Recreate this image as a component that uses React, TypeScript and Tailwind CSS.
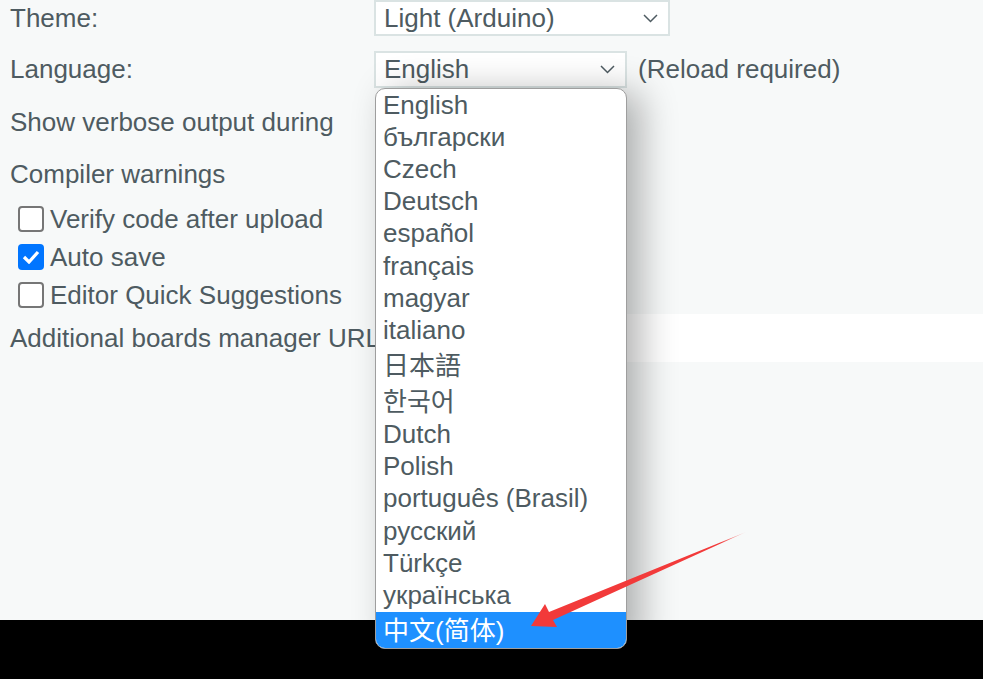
import React from "react";

const languages = [
  { label: "English" },
  { label: "български" },
  { label: "Czech" },
  { label: "Deutsch" },
  { label: "español" },
  { label: "français" },
  { label: "magyar" },
  { label: "italiano" },
  { label: "日本語", cjk: true },
  { label: "한국어", cjk: true },
  { label: "Dutch" },
  { label: "Polish" },
  { label: "português (Brasil)" },
  { label: "русский" },
  { label: "Türkçe" },
  { label: "українська" },
  { label: "中文(简体)", cjk: true, selected: true },
];

const Chevron = () => (
  <svg width="15" height="9" viewBox="0 0 15 9" fill="none">
    <polyline points="1,1 7.5,7.5 14,1" stroke="#4e5b61" strokeWidth="1.5" />
  </svg>
);

const Checkbox = ({ checked }: { checked?: boolean }) =>
  checked ? (
    <div className="w-[26px] h-[26px] rounded-[4px] bg-[#0075ff] flex items-center justify-center">
      <svg width="18" height="14" viewBox="0 0 18 14" fill="none">
        <polyline points="2,7 7,12 16,2" stroke="white" strokeWidth="3.2" />
      </svg>
    </div>
  ) : (
    <div className="w-[26px] h-[26px] rounded-[4px] border-2 border-[#767676] bg-white" />
  );

const App = () => {
  return (
    <div
      className="relative w-[983px] h-[679px] overflow-hidden bg-[#f7f9f9] text-[#4e5b61] text-[26px]"
      style={{ fontFamily: '"Liberation Sans", "Noto Sans CJK SC", sans-serif' }}
    >
      <div className="h-[620px] pl-[10px] flex flex-col">
        <div className="flex items-center h-[36px]">
          <div className="w-[364px]">Theme:</div>
          <div className="w-[296px] h-[36px] bg-white border-2 border-[#dae3e3] flex items-center justify-between pl-[8px] pr-[10px]">
            <span>Light (Arduino)</span>
            <Chevron />
          </div>
        </div>
        <div className="flex items-center h-[37px] mt-[15px]">
          <div className="w-[364px]">Language:</div>
          <div className="w-[253px] h-[37px] bg-white border-2 border-[#dae3e3] flex items-center justify-between pl-[8px] pr-[10px]">
            <span>English</span>
            <Chevron />
          </div>
          <span className="ml-[11px]">(Reload required)</span>
        </div>
        <div className="flex items-center h-[34px] mt-[17px]">Show verbose output during</div>
        <div className="flex items-center h-[34px] mt-[18px]">Compiler warnings</div>
        <div className="flex flex-col mt-[9px] pl-[8px]">
          <div className="flex items-center h-[38px] gap-[6px]">
            <Checkbox />
            <span>Verify code after upload</span>
          </div>
          <div className="flex items-center h-[38px] gap-[6px]">
            <Checkbox checked />
            <span>Auto save</span>
          </div>
          <div className="flex items-center h-[38px] gap-[6px]">
            <Checkbox />
            <span>Editor Quick Suggestions</span>
          </div>
        </div>
        <div className="flex items-center h-[48px] whitespace-nowrap">
          <span>Additional boards manager URLs</span>
          <div className="flex-1 h-[48px] bg-white ml-[10px]" />
        </div>
      </div>
      <div className="h-[59px] bg-black" />

      <div className="absolute left-[375px] top-[88px] w-[252px] h-[561px] bg-white border-[1.5px] border-[#9e9e9e] rounded-[10px] overflow-hidden shadow-[14px_4px_36px_rgba(0,0,0,0.3)]">
        {languages.map((l) => (
          <div
            key={l.label}
            className={
              (l.cjk ? "h-[36px] pt-[3px] " : "h-[32.2px] ") +
              "flex items-center pl-[7px] whitespace-nowrap " +
              (l.selected ? "bg-[#1e90ff] text-white" : "")
            }
          >
            {l.label}
          </div>
        ))}
      </div>

      <svg className="absolute left-0 top-0" width="983" height="679" viewBox="0 0 983 679">
        <defs>
          <linearGradient id="arrowFade" x1="746" y1="532" x2="531" y2="625" gradientUnits="userSpaceOnUse">
            <stop offset="0" stopColor="#f23a3a" stopOpacity="0.2" />
            <stop offset="0.12" stopColor="#f23a3a" stopOpacity="1" />
            <stop offset="1" stopColor="#f23a3a" />
          </linearGradient>
        </defs>
        <polygon
          points="746,532 549,612 545,604 531,626 557,627 553,620"
          fill="url(#arrowFade)"
        />
      </svg>
    </div>
  );
};

export default App;
